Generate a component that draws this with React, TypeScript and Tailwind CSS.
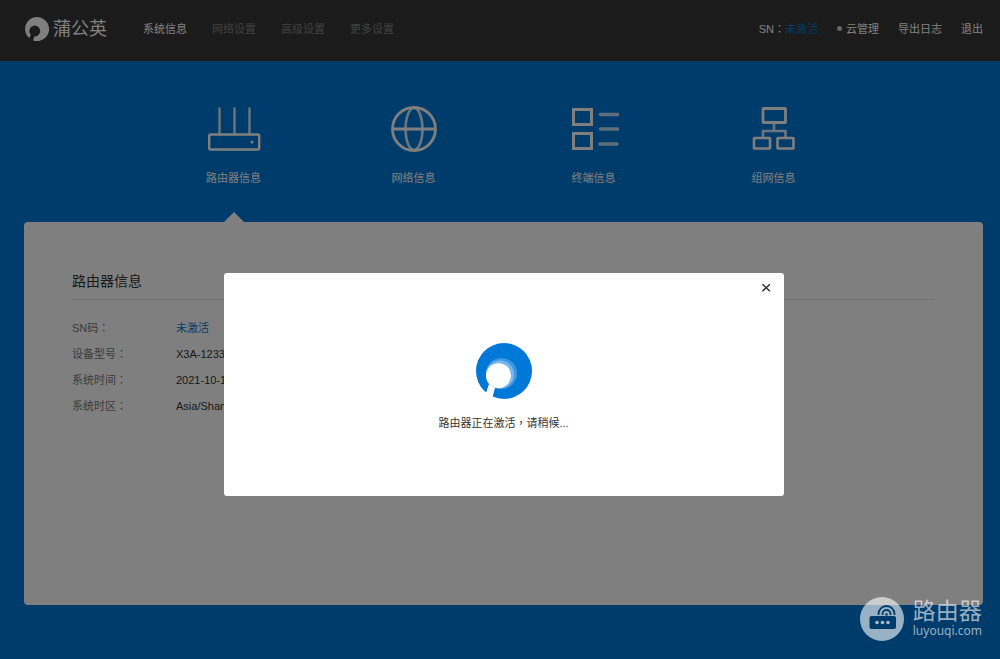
import { useState } from 'react';
import type { ReactNode } from 'react';

const navItems = ['系统信息', '网络设置', '高级设置', '更多设置'];

function LogoMark() {
  return (
    <svg viewBox="0 0 24 24" className="h-6 w-6" aria-hidden="true">
      <path
        fill="#fff"
        fillRule="evenodd"
        d="M4.2 21.1A12 12 0 1 1 8.2 23.4L9.2 19.4A5.4 5.4 0 1 0 5.9 17.8Z"
      />
    </svg>
  );
}

function RouterIcon() {
  return (
    <svg viewBox="0 0 54 46" className="h-[46px] w-[54px]" fill="none" stroke="currentColor" aria-hidden="true">
      <rect x="2.2" y="28.500" width="50" height="15" rx="1.5" strokeWidth="2.4" />
      <path d="M12.500 2.500v26M27.500 2.500v26M42.500 2.500v26" strokeWidth="2.4" strokeLinecap="round" opacity="0.85" />
      <circle cx="45" cy="36" r="1.5" fill="currentColor" stroke="none" />
    </svg>
  );
}

function GlobeIcon() {
  return (
    <svg viewBox="0 0 46 46" className="h-[46px] w-[46px]" fill="none" stroke="currentColor" aria-hidden="true">
      <circle cx="23" cy="23" r="21.500" strokeWidth="2.8" />
      <path d="M2 23h42" strokeWidth="2.8" />
      <ellipse cx="23" cy="23" rx="8.5" ry="21" strokeWidth="2.6" opacity="0.85" />
    </svg>
  );
}

function TerminalIcon() {
  return (
    <svg viewBox="0 0 50 46" className="h-[46px] w-[50px]" fill="none" stroke="currentColor" aria-hidden="true">
      <rect x="4.500" y="3.500" width="18" height="15" strokeWidth="3" />
      <rect x="4.500" y="27.500" width="18" height="15" strokeWidth="3" />
      <path d="M31.500 8.500h17M31.500 23h17M31 38h17" strokeWidth="3.6" strokeLinecap="round" opacity="0.75" />
    </svg>
  );
}

function NetworkIcon() {
  return (
    <svg viewBox="0 0 44 46" className="h-[46px] w-[44px]" fill="none" stroke="currentColor" aria-hidden="true">
      <rect x="11" y="2.500" width="22.500" height="14" rx="0.5" strokeWidth="2.8" />
      <rect x="2" y="32" width="16" height="10.500" rx="0.5" strokeWidth="2.6" />
      <rect x="25.500" y="32" width="16" height="10.500" rx="0.5" strokeWidth="2.6" />
      <path d="M22 17v8M11 31v-6h22.500v6" strokeWidth="2.6" opacity="0.85" />
    </svg>
  );
}

const tabs = [
  { label: '路由器信息', icon: <RouterIcon /> },
  { label: '网络信息', icon: <GlobeIcon /> },
  { label: '终端信息', icon: <TerminalIcon /> },
  { label: '组网信息', icon: <NetworkIcon /> },
];

// full-width punctuation sits in the middle of its box
function Mark({ children }: { children: ReactNode }) {
  return <span className="font-['Noto_Sans_CJK_TC',sans-serif] leading-none">{children}</span>;
}

function Header() {
  return (
    <header className="flex h-[61px] items-center bg-[#363636] pr-[17px] pb-1 pl-[25px] text-white">
      <a href="#home" className="flex items-center gap-1">
        <LogoMark />
        <span className="text-lg leading-6">蒲公英</span>
      </a>
      <nav className="ml-9 flex gap-[25px]">
        {navItems.map((item, i) => (
          <a key={item} href={`#nav-${i}`} className={i === 0 ? 'text-white' : 'text-[#828282]'}>
            {item}
          </a>
        ))}
      </nav>
      <div className="ml-auto flex items-center gap-[19px]">
        <span>
          SN<Mark>：</Mark>
          <a href="#activate" className="text-[#0078d7]">未激活</a>
        </span>
        <a href="#cloud" className="flex items-center gap-1">
          <span className="h-[5px] w-[5px] rounded-full bg-[#ccc]" />
          云管理
        </a>
        <a href="#log">导出日志</a>
        <a href="#logout">退出</a>
      </div>
    </header>
  );
}

function TabBar({ active, onSelect }: { active: number; onSelect: (i: number) => void }) {
  return (
    <div role="tablist" className="flex justify-center">
      {tabs.map((tab, i) => (
        <button
          key={tab.label}
          role="tab"
          aria-selected={active === i}
          onClick={() => onSelect(i)}
          className="flex w-[180px] flex-col items-center pt-[45px] text-white"
        >
          {tab.icon}
          <span className="mt-[18px]">{tab.label}</span>
          <svg viewBox="0 0 20 10" className="mt-[26px] h-[10px] w-5" aria-hidden="true">
            {active === i && <path d="M0 10L10 0l10 10z" fill="#fff" />}
          </svg>
        </button>
      ))}
    </div>
  );
}

function InfoRow({ label, children }: { label: string; children: ReactNode }) {
  return (
    <div className="flex leading-[26px]">
      <dt className="w-[104px] shrink-0 text-[#777]">
        {label}
        <Mark>：</Mark>
      </dt>
      <dd className="text-[#333]">{children}</dd>
    </div>
  );
}

function InfoPanel() {
  return (
    <section className="min-h-[383px] rounded bg-white px-12 pt-[49px]">
      <h2 className="border-b border-[#e0e0e0] pb-2 text-sm leading-5 text-[#333]">路由器信息</h2>
      <dl className="mt-[15px]">
        <InfoRow label="SN码">
          <a href="#activate" className="text-[#0078d7]">未激活</a>
        </InfoRow>
        <InfoRow label="设备型号">X3A-1233</InfoRow>
        <InfoRow label="系统时间">2021-10-12</InfoRow>
        <InfoRow label="系统时区">Asia/Shanghai</InfoRow>
      </dl>
    </section>
  );
}

function ActivatingDialog({ onClose }: { onClose: () => void }) {
  return (
    <div className="absolute inset-0 flex items-start justify-center bg-black/50 pt-[273px] pr-[17px] pl-6">
      <div
        role="dialog"
        aria-modal="true"
        aria-labelledby="activating"
        className="flex min-h-[223px] w-[560px] flex-col rounded-[3px] bg-white"
      >
        <button onClick={onClose} aria-label="关闭" className="mt-[5px] mr-2 self-end p-1">
          <svg viewBox="0 0 10 10" className="h-[11px] w-[11px]" aria-hidden="true">
            <path d="M1.3 2l6.800 6.400M8.100 2l-6.800 6.400" stroke="#333" strokeWidth="1.4" />
          </svg>
        </button>
        <div className="mt-[46px] flex flex-col items-center">
          <svg viewBox="0 0 56 56" className="h-14 w-14" aria-hidden="true">
            <circle cx="28" cy="28" r="28" fill="#0078d7" />
            <circle cx="25.500" cy="30.500" r="15.500" fill="#3f98e3" />
            <circle cx="24" cy="31.500" r="14" fill="#78b7ec" />
            <circle cx="22.500" cy="32.700" r="12.500" fill="#fff" />
            <path d="M13 41L8 56h8l3-11z" fill="#fff" />
          </svg>
          <p id="activating" className="mt-4 text-[#333]">
            路由器正在激活<Mark>，</Mark>请稍候...
          </p>
        </div>
      </div>
    </div>
  );
}

function SiteBadge() {
  return (
    <a href="#luyouqi" className="absolute right-[18px] bottom-[18px] flex items-center gap-[9px] text-white/60">
      <svg viewBox="0 0 44 44" className="h-11 w-11" aria-hidden="true">
        <circle cx="22" cy="22" r="22" fill="currentColor" />
        <rect x="9.500" y="19" width="26.500" height="13" rx="2" fill="#003c6b" />
        <g fill="none" stroke="#003c6b" strokeWidth="1.8">
          <path d="M18.500 18v-1a8 8 0 0 1 16 0v1" />
          <path d="M22.500 18v-1a4 4 0 0 1 8 0v1" />
        </g>
        <circle cx="26.500" cy="17.500" r="1.3" fill="#003c6b" />
        <g fill="#a8bccd">
          <circle cx="17" cy="25.500" r="1.8" />
          <circle cx="22.500" cy="25.500" r="1.8" />
          <circle cx="28" cy="25.500" r="1.8" />
        </g>
      </svg>
      <span className="flex flex-col">
        <span className="text-[23px] leading-6">路由器</span>
        <span className="font-['Noto_Sans',sans-serif] text-xs leading-4">luyouqi.com</span>
      </span>
    </a>
  );
}

export default function App() {
  const [active, setActive] = useState(0);
  const [open, setOpen] = useState(true);

  return (
    <div className="relative min-h-screen bg-[#0078d7] font-['Liberation_Sans','Noto_Sans_CJK_SC',sans-serif] text-[11px] leading-4">
      <Header />
      <main className="pr-[17px] pl-6">
        <TabBar active={active} onSelect={setActive} />
        <InfoPanel />
      </main>
      {open && <ActivatingDialog onClose={() => setOpen(false)} />}
      <SiteBadge />
    </div>
  );
}
